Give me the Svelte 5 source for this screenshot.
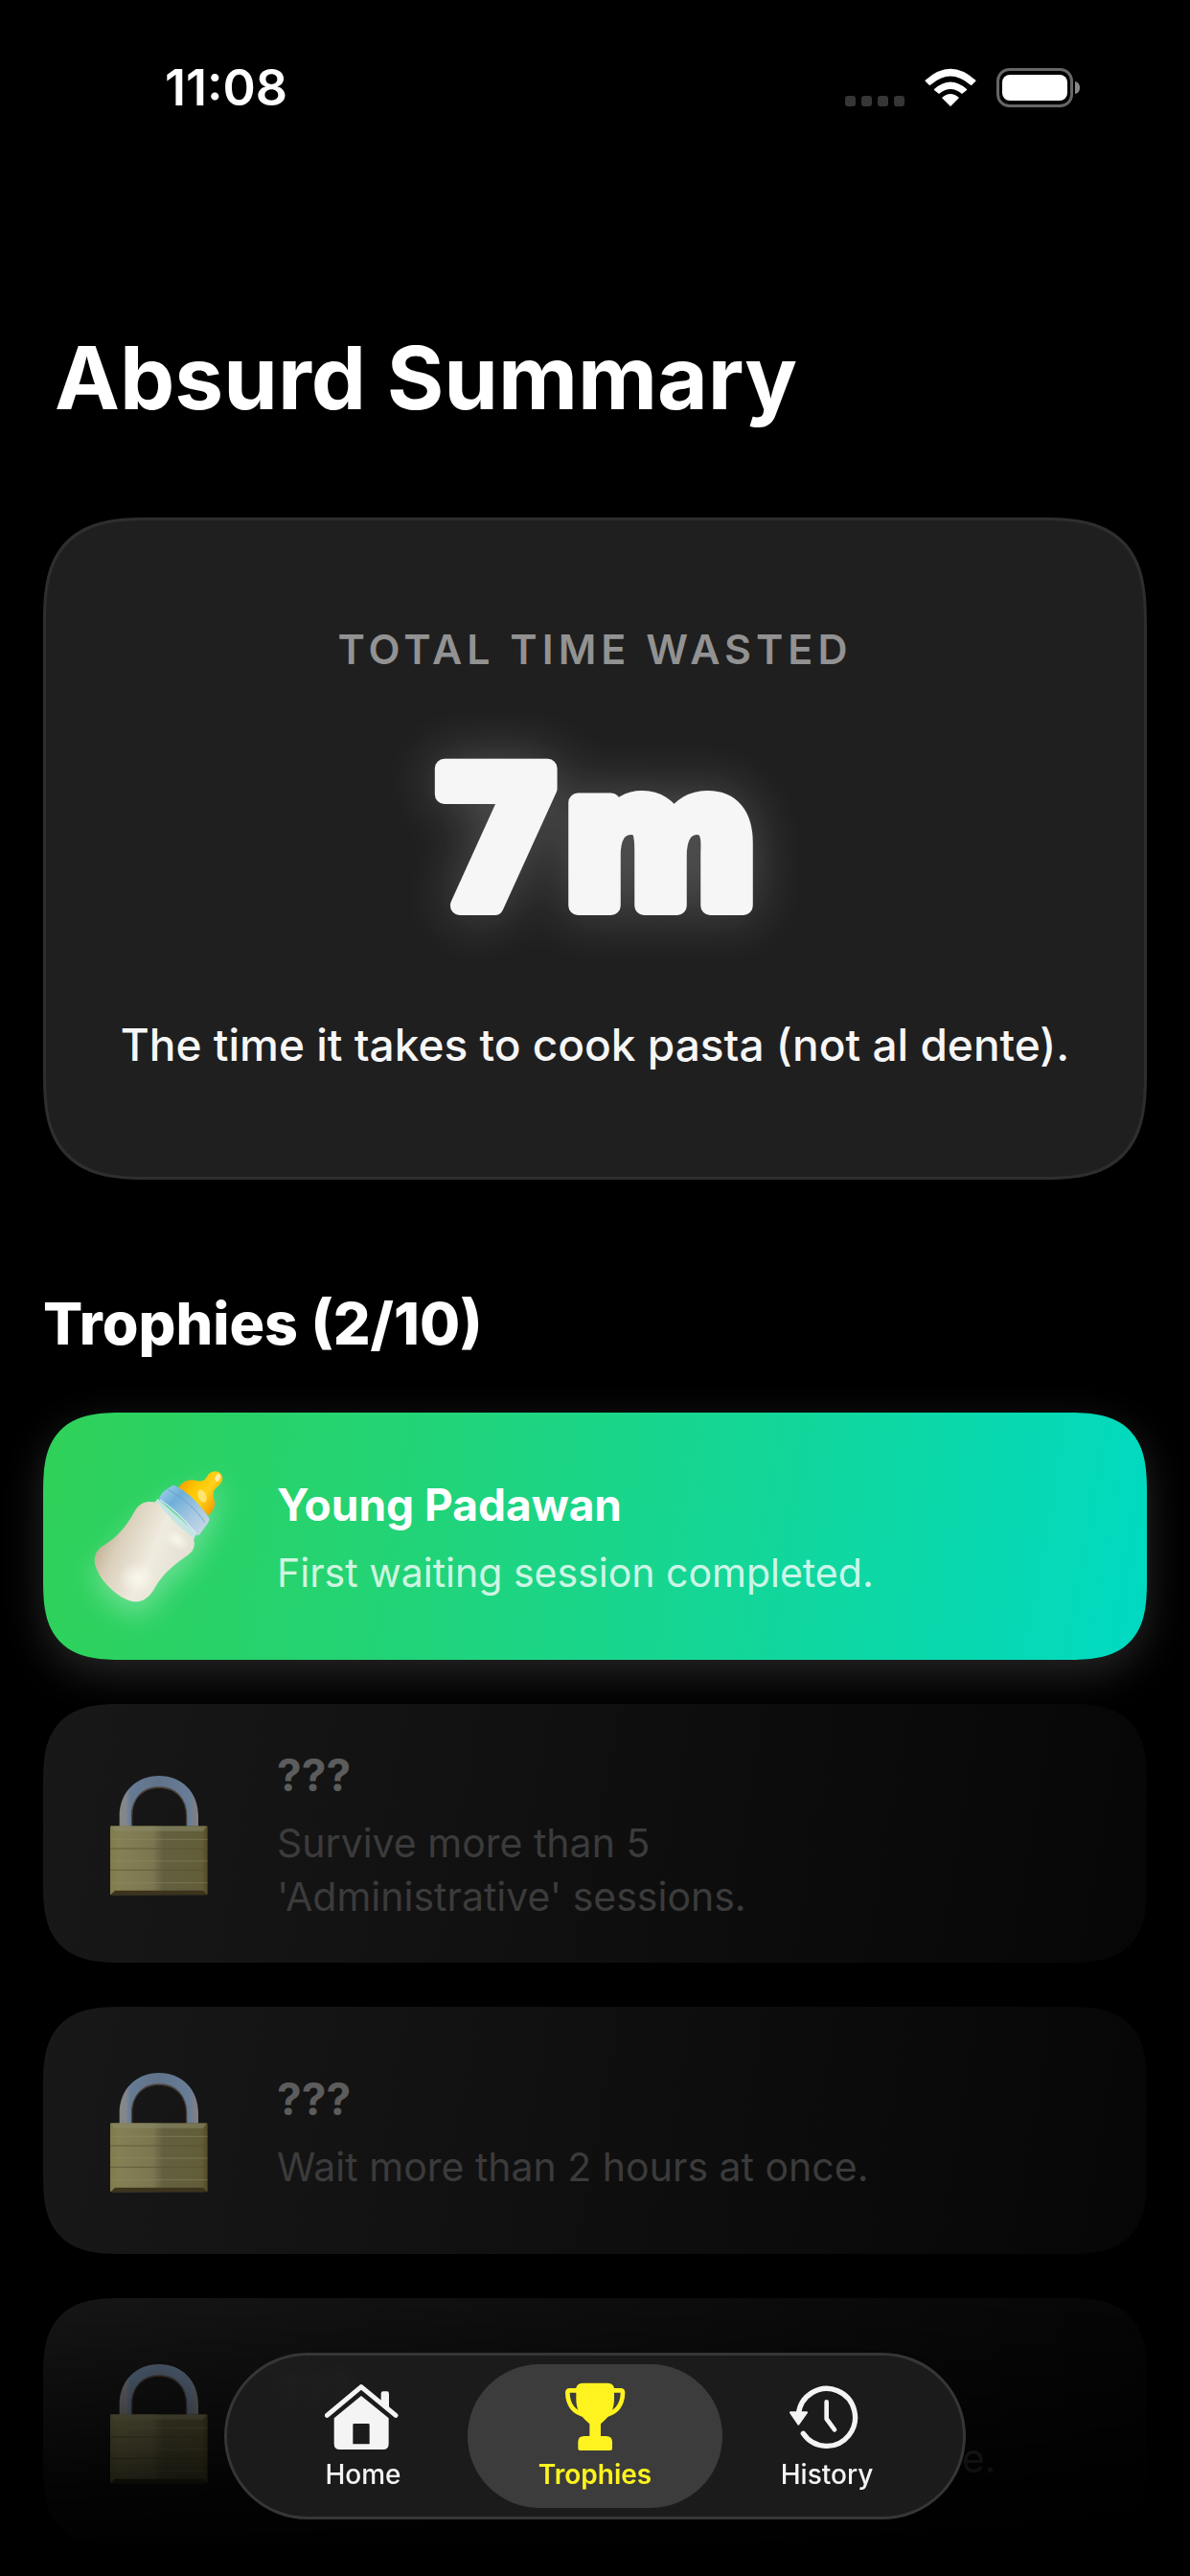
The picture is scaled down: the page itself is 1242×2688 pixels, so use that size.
<script lang="ts">
	interface Trophy {
		title: string;
		description: string;
		unlocked: boolean;
	}

	interface Tab {
		id: string;
		label: string;
	}

	const total = '7m';
	const totalCount = 10;
	const unlockedCount = 2;

	const trophies: Trophy[] = [
		{ title: 'Young Padawan', description: 'First waiting session completed.', unlocked: true },
		{ title: '???', description: "Survive more than 5 'Administrative' sessions.", unlocked: false },
		{ title: '???', description: 'Wait more than 2 hours at once.', unlocked: false },
		{ title: '???', description: 'Reach 3 hours of cumulative wait time.', unlocked: false },
	];

	const tabs: Tab[] = [
		{ id: 'home', label: 'Home' },
		{ id: 'trophies', label: 'Trophies' },
		{ id: 'history', label: 'History' },
	];

	let activeTab = $state('trophies');
</script>

{#snippet bottle()}
	<svg class="emoji glow" viewBox="93 61 456 498" aria-hidden="true">
		<defs>
			<linearGradient id="milk" x1="0" y1="0.35" x2="0.9" y2="0.75">
				<stop offset="0" stop-color="#b9a88a" />
				<stop offset="0.25" stop-color="#dacfbb" />
				<stop offset="0.6" stop-color="#efebdf" />
				<stop offset="1" stop-color="#e4dfd2" />
			</linearGradient>
			<linearGradient id="collar" x1="0" y1="0" x2="1" y2="1">
				<stop offset="0" stop-color="#a9d3ee" />
				<stop offset="0.3" stop-color="#6fafd9" />
				<stop offset="0.65" stop-color="#a9c9e2" />
				<stop offset="1" stop-color="#cfdde6" />
			</linearGradient>
			<linearGradient id="teat" x1="0" y1="0" x2="1" y2="0.7">
				<stop offset="0" stop-color="#f08a00" />
				<stop offset="0.4" stop-color="#ffc400" />
				<stop offset="0.65" stop-color="#ffd21a" />
				<stop offset="1" stop-color="#f39200" />
			</linearGradient>
			<radialGradient id="shine">
				<stop offset="0" stop-color="#fffdf2" stop-opacity="0.7" />
				<stop offset="1" stop-color="#fffdf2" stop-opacity="0" />
			</radialGradient>
		</defs>
		<path fill="url(#teat)" d="M379 158C392 138 412 130 434 136C450 140 461 137 468 124C476 106 497 101 511 114C522 126 517 142 503 153C488 164 484 174 490 194C496 215 488 232 472 245Z" />
		<ellipse cx="453" cy="184" rx="12" ry="21" transform="rotate(-25 453 184)" fill="#ffe98a" opacity="0.8" />
		<ellipse cx="502" cy="127" rx="8" ry="12" transform="rotate(25 502 127)" fill="#fff0cf" opacity="0.8" />
		<path fill="#c5e4e4" d="M313 192L436 301L426 322C380 300 335 258 303 208Z" />
		<path fill="url(#collar)" d="M330 172L356 153C362 150 368 151 373 154C415 178 446 209 474 252C477 258 475 264 471 269L446 303C442 308 437 308 432 304C402 266 366 230 322 200C317 197 318 191 320 187Z" />
		<path fill="none" stroke="#5d98c0" stroke-width="3" opacity="0.7" d="M346 164C394 190 433 225 462 267" />
		<path fill="none" stroke="#e4f3fa" stroke-width="4" opacity="0.8" d="M321 196C364 224 402 262 434 302" />
		<path fill="url(#milk)" d="M264 208C280 200 297 201 315 206C345 246 380 282 424 313C433 337 428 354 412 366C370 396 335 420 305 471C288 502 268 516 240 515C192 507 130 450 117 396C113 372 122 354 140 342C190 311 214 281 238 238C245 225 252 215 264 208Z" />
		<ellipse cx="249" cy="440" rx="60" ry="50" fill="url(#shine)" />
		<ellipse cx="375" cy="322" rx="44" ry="26" transform="rotate(38 375 322)" fill="url(#shine)" />
	</svg>
{/snippet}

{#snippet lock()}
	<svg class="emoji" viewBox="33 30 456 498" aria-hidden="true">
		<defs>
			<linearGradient id="brass" x1="0" y1="0" x2="1" y2="0">
				<stop offset="0" stop-color="#7f7b4b" />
				<stop offset="0.08" stop-color="#858054" />
				<stop offset="0.44" stop-color="#7b7650" />
				<stop offset="0.54" stop-color="#636040" />
				<stop offset="0.94" stop-color="#625d39" />
				<stop offset="1" stop-color="#544a25" />
			</linearGradient>
			<linearGradient id="steel" x1="0" y1="0" x2="1" y2="0">
				<stop offset="0" stop-color="#858585" />
				<stop offset="0.08" stop-color="#85878c" />
				<stop offset="0.14" stop-color="#657b94" />
				<stop offset="0.5" stop-color="#61738a" />
				<stop offset="0.88" stop-color="#687d98" />
				<stop offset="1" stop-color="#85807e" />
			</linearGradient>
		</defs>
		<path fill="url(#steel)" d="M134 262V226C134 150 187 99 258 99C329 99 381 150 381 226V262H344V226C344 172 311 137 258 137C205 137 172 172 172 226V262Z" />
		<path fill="none" stroke="#4b3f36" stroke-width="4" d="M173 258V226C173 170 206 135 258 135C310 135 344 170 344 226V258" />
		<rect x="105" y="256" width="305" height="216" rx="4" fill="url(#brass)" />
		<path fill="#8b8c6c" opacity="0.5" d="M107 257H408L396 272H119Z" />
		<path stroke="#55512f" stroke-width="3" opacity="0.7" d="M106 327H409M106 394H409" />
		<path stroke="#918d66" stroke-width="3" opacity="0.5" d="M106 298H409M106 366H409M106 434H409" />
		<path fill="#3c331c" d="M107 471L120 458H396L409 471Z" />
	</svg>
{/snippet}

{#snippet tabIcon(id: string)}
	{#if id === 'home'}
		<svg class="tab-icon" viewBox="327 138 240 216" aria-hidden="true">
			<path fill="none" stroke="currentColor" stroke-width="15" stroke-linecap="round" stroke-linejoin="round" d="M334 241L441 152L549 241" />
			<path fill="currentColor" d="M503 196V173Q503 166 510 166H521Q528 166 528 173V222Z" />
			<path fill="currentColor" fill-rule="evenodd" d="M441 180L527 250V330Q527 348 509 348H374Q356 348 356 330V250ZM419 267Q415 267 415 271V331H467V271Q467 267 463 267Z" />
		</svg>
	{:else if id === 'trophies'}
		<svg class="tab-icon" viewBox="183 138 240 216" aria-hidden="true">
			<path fill="none" stroke="currentColor" stroke-width="14" stroke-linejoin="round" d="M252 163H224Q217 163 217 171C218 208 236 232 272 241M355 163H383Q390 163 390 171C389 208 371 232 335 241" />
			<path fill="currentColor" d="M244 160Q244 140 264 140H343Q363 140 363 160V190C363 222 352 242 321 268V306H338Q357 306 357 325V345Q357 351 351 351H256Q250 351 250 345V325Q250 306 269 306H286V268C255 242 244 222 244 190Z" />
		</svg>
	{:else}
		<svg class="tab-icon" viewBox="99 138 240 216" aria-hidden="true">
			<path fill="none" stroke="currentColor" stroke-width="16" stroke-linecap="round" d="M130 238A89 90 0 1 1 145 298" />
			<path fill="currentColor" stroke="currentColor" stroke-width="6" stroke-linejoin="round" d="M105 232H156L130 269Z" />
			<path fill="none" stroke="currentColor" stroke-width="14" stroke-linecap="round" stroke-linejoin="round" d="M218 199V252L243 286" />
		</svg>
	{/if}
{/snippet}

<div class="screen">
	<header class="status-bar">
		<time>11:08</time>
		<div class="indicators">
			<svg width="62" height="42" viewBox="0 0 62 42" aria-hidden="true">
				<g fill="#363636">
					<rect x="0" y="29" width="11" height="11" rx="3" />
					<rect x="17" y="29" width="11" height="11" rx="3" />
					<rect x="34" y="29" width="11" height="11" rx="3" />
					<rect x="51" y="29" width="11" height="11" rx="3" />
				</g>
			</svg>
			<svg width="54" height="42" viewBox="0 0 54 42" aria-hidden="true">
				<path fill="#fff" d="M27 40L18 31Q27 23 36 31ZM1 12.500Q27 -11 53 12.500Q54 13 53 14L49 18Q48 18 47 17Q27 0 7 17Q6 18 5 18L1 14Q0 13 1 12.500ZM10 22Q27 7 44 22Q44 23 44 23L39 27Q27 17 15 27L10 23Q10 23 10 22Z" />
			</svg>
			<svg width="88" height="42" viewBox="0 0 88 42" aria-hidden="true">
				<rect x="1.500" y="1.500" width="77" height="38" rx="12" fill="none" stroke="#666" stroke-width="3" />
				<rect x="6" y="7" width="68" height="27" rx="8" fill="#fff" />
				<path fill="#888" d="M82 14Q87 15 87 20.500Q87 26 82 27Z" />
			</svg>
		</div>
	</header>

	<main>
		<h1>Absurd Summary</h1>

		<section class="summary">
			<h2 class="summary-label">Total time wasted</h2>
			<svg class="total" viewBox="0 0 400 224" role="img" aria-label={total}>
				<text x="200" y="184" text-anchor="middle">{total}</text>
			</svg>
			<p>The time it takes to cook pasta (not al dente).</p>
		</section>

		<h2 class="section-title">Trophies ({unlockedCount}/{totalCount})</h2>

		<ul class="trophies">
			{#each trophies as trophy}
				<li class="trophy" class:unlocked={trophy.unlocked}>
					{#if trophy.unlocked}
						{@render bottle()}
					{:else}
						{@render lock()}
					{/if}
					<div class="trophy-text">
						<h3>{trophy.title}</h3>
						<p>{trophy.description}</p>
					</div>
				</li>
			{/each}
		</ul>
	</main>

	<div class="fade"></div>

	<nav class="tab-bar">
		{#each tabs as tab}
			<button class="tab" class:active={activeTab === tab.id} onclick={() => (activeTab = tab.id)}>
				{@render tabIcon(tab.id)}
				<span>{tab.label}</span>
			</button>
		{/each}
	</nav>
</div>

<style>
	:global(body) {
		background: #000;
	}

	.screen {
		background: #000;
		color: #fff;
		font-family: Inter, 'Liberation Sans', sans-serif;
	}

	h1,
	h2,
	h3,
	p,
	ul {
		margin: 0;
		padding: 0;
	}

	.status-bar {
		display: flex;
		align-items: center;
		justify-content: space-between;
		padding: 60px 114px 0 172px;
	}

	time {
		font-size: 52px;
		line-height: 64px;
		font-weight: 600;
	}

	.indicators {
		display: flex;
		gap: 21px;
	}

	main {
		padding: 210px 45px 30px;
	}

	h1 {
		padding: 0 12px;
		font-size: 91px;
		line-height: 120px;
		font-weight: 700;
	}

	.summary {
		display: flex;
		flex-direction: column;
		align-items: center;
		margin-top: 86px;
		padding: 106px 46px 110px;
		background: #1f1f1f;
		border: 3px solid #2e2e2e;
		border-radius: 92px;
		text-align: center;
	}

	.summary-label {
		font-size: 43px;
		line-height: 56px;
		font-weight: 600;
		letter-spacing: 5px;
		text-transform: uppercase;
		color: #929292;
	}

	/* heavy rounded numerals: the round-joined stroke softens the corners */
	.total {
		width: 400px;
		height: 224px;
		margin: 56px 0 77px;
		overflow: visible;
		filter: drop-shadow(0 0 28px rgba(255, 255, 255, 0.24));
	}

	.total text {
		font-family: 'DejaVu Sans', sans-serif;
		font-size: 196px;
		font-weight: 700;
		fill: #f6f6f6;
		stroke: #f6f6f6;
		stroke-width: 20px;
		stroke-linejoin: round;
	}

	.summary p {
		font-size: 46px;
		line-height: 56px;
		font-weight: 500;
		color: #f6f6f6;
	}

	.section-title {
		margin-top: 114px;
		font-size: 61px;
		line-height: 72px;
		font-weight: 800;
	}

	.trophies {
		display: flex;
		flex-direction: column;
		gap: 46px;
		margin-top: 57px;
		list-style: none;
	}

	.trophy {
		display: flex;
		align-items: center;
		gap: 46px;
		padding: 46px;
		background: linear-gradient(100deg, #181818, #060606);
		border-radius: 72px;
		color: #5c5c5c;
	}

	.trophy.unlocked {
		background: linear-gradient(100deg, #30d158, 54%, #00dac3);
		box-shadow: 0 14px 44px rgba(255, 255, 255, 0.15);
		color: #fff;
	}

	@supports (corner-shape: squircle) {
		.summary {
			border-radius: 112px;
			corner-shape: superellipse(1.5);
		}

		.trophy {
			border-radius: 84px;
			corner-shape: superellipse(1.5);
		}
	}

	.emoji {
		flex-shrink: 0;
		width: 152px;
		height: 166px;
		overflow: visible;
	}

	.emoji.glow {
		filter: drop-shadow(0 14px 14px rgba(255, 255, 255, 0.3));
	}

	/* the last line's leading hangs into the card padding */
	.trophy-text {
		display: flex;
		flex-direction: column;
		gap: 15px;
		margin-bottom: -5px;
	}

	h3 {
		font-size: 46px;
		line-height: 56px;
		font-weight: 700;
	}

	.trophy-text p {
		font-size: 41px;
		line-height: 56px;
		color: #3b3b3b;
		text-wrap: balance;
	}

	.unlocked .trophy-text p {
		color: rgba(255, 255, 255, 0.8);
	}

	.fade {
		position: fixed;
		inset: auto 0 0;
		height: 310px;
		background: linear-gradient(transparent, rgba(0, 0, 0, 0.8) 70%, #000);
	}

	.tab-bar {
		position: fixed;
		bottom: 59px;
		left: 50%;
		display: flex;
		box-sizing: border-box;
		padding: 9px 21px;
		background: rgba(29, 29, 29, 0.92);
		border: 3px solid #363636;
		border-radius: 87px;
		backdrop-filter: blur(4px);
		transform: translateX(-50%);
	}

	.tab {
		display: flex;
		flex-direction: column;
		align-items: center;
		gap: 8px;
		width: 266px;
		margin: 0 -12px;
		padding: 19px 0;
		background: none;
		border: 0;
		border-radius: 76px;
		color: #f4f4f4;
		font-family: inherit;
		font-size: 28px;
		line-height: 32px;
		font-weight: 500;
		cursor: pointer;
	}

	.tab.active {
		background: #3c3c3c;
		color: #fff31f;
		font-weight: 600;
	}

	.tab-icon {
		width: 80px;
		height: 72px;
	}
</style>
